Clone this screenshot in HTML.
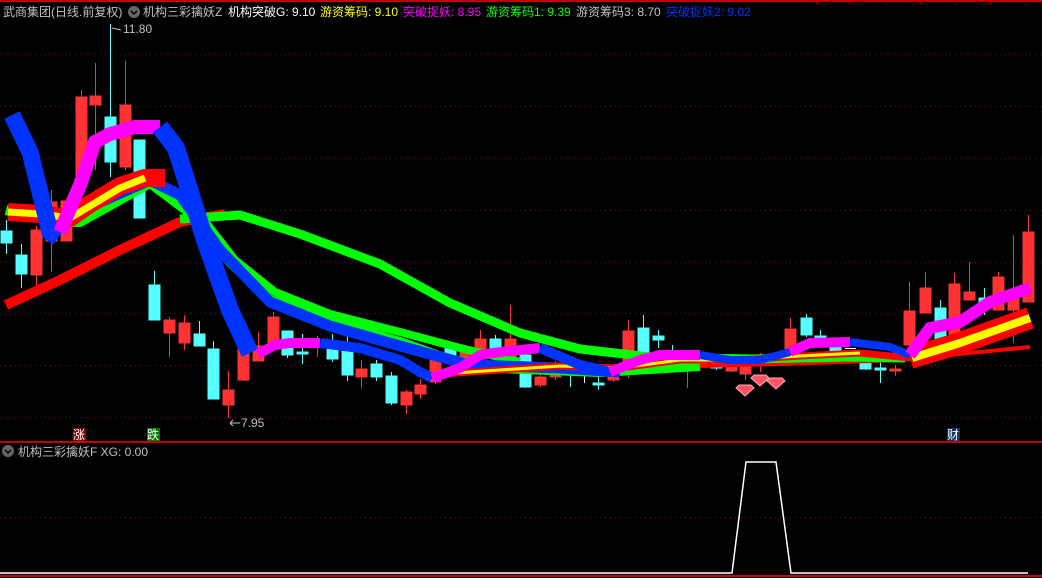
<!DOCTYPE html>
<html><head><meta charset="utf-8"><style>
html,body{margin:0;padding:0;background:#000;width:1042px;height:578px;overflow:hidden}
svg{display:block}
text{font-family:"Liberation Sans","Noto Sans CJK SC",sans-serif;font-size:12px}
</style></head><body>
<svg width="1042" height="578" viewBox="0 0 1042 578" xmlns="http://www.w3.org/2000/svg">
<rect width="1042" height="578" fill="#000"/>
<line x1="0" y1="1" x2="1042" y2="1" stroke="#c00000" stroke-width="2"/>
<g stroke="#c00000" stroke-width="1"><line x1="816.5" y1="0" x2="816.5" y2="4"/><line x1="850.5" y1="0" x2="850.5" y2="4"/><line x1="885.5" y1="0" x2="885.5" y2="4"/><line x1="920.5" y1="0" x2="920.5" y2="4"/><line x1="955.5" y1="0" x2="955.5" y2="4"/><line x1="990.5" y1="0" x2="990.5" y2="4"/><line x1="1025.5" y1="0" x2="1025.5" y2="4"/></g>
<g stroke="#7a1010" stroke-width="1" stroke-dasharray="1,4">
<line x1="0" y1="54.5" x2="1042" y2="54.5"/><line x1="0" y1="106.5" x2="1042" y2="106.5"/><line x1="0" y1="158.5" x2="1042" y2="158.5"/><line x1="0" y1="210.5" x2="1042" y2="210.5"/><line x1="0" y1="262.5" x2="1042" y2="262.5"/><line x1="0" y1="313.5" x2="1042" y2="313.5"/><line x1="0" y1="365.5" x2="1042" y2="365.5"/><line x1="0" y1="417.5" x2="1042" y2="417.5"/><line x1="0" y1="517.5" x2="1042" y2="517.5"/>
</g>
<line x1="0" y1="442" x2="1042" y2="442" stroke="#c00000" stroke-width="2"/>
<line x1="0" y1="576" x2="1042" y2="576" stroke="#c00000" stroke-width="2"/>

<g stroke-width="1">
<g stroke="#54ffff" fill="#54ffff">
<line x1="6.5" y1="220" x2="6.5" y2="254"/><rect x="1" y="231" width="11" height="12"/>
<line x1="21.5" y1="244" x2="21.5" y2="288"/><rect x="16" y="255" width="11" height="19"/>
<line x1="110.5" y1="24" x2="110.5" y2="177"/><rect x="105" y="117" width="11" height="45"/>
<line x1="139.5" y1="140" x2="139.5" y2="218"/><rect x="134" y="140" width="11" height="78"/>
<line x1="154.5" y1="271" x2="154.5" y2="320"/><rect x="149" y="285" width="11" height="35"/>
<line x1="199.5" y1="321" x2="199.5" y2="346"/><rect x="194" y="334" width="11" height="12"/>
<line x1="213.5" y1="341" x2="213.5" y2="399"/><rect x="208" y="349" width="11" height="50"/>
<line x1="287.5" y1="331" x2="287.5" y2="358"/><rect x="282" y="331" width="11" height="24"/>
<line x1="302.5" y1="334" x2="302.5" y2="364"/><rect x="297" y="352" width="11" height="2"/>
<line x1="332.5" y1="334" x2="332.5" y2="362"/><rect x="327" y="348" width="11" height="11"/>
<line x1="347.5" y1="336" x2="347.5" y2="381"/><rect x="342" y="348" width="11" height="27"/>
<line x1="376.5" y1="360" x2="376.5" y2="381"/><rect x="371" y="364" width="11" height="13"/>
<line x1="391.5" y1="372" x2="391.5" y2="405"/><rect x="386" y="376" width="11" height="27"/>
<line x1="450.5" y1="344" x2="450.5" y2="360"/><rect x="445" y="348" width="11" height="10"/>
<line x1="495.5" y1="335" x2="495.5" y2="358"/><rect x="490" y="339" width="11" height="16"/>
<line x1="525.5" y1="351" x2="525.5" y2="388"/><rect x="520" y="355" width="11" height="32"/>
<line x1="570.5" y1="362" x2="570.5" y2="387"/><rect x="565" y="372" width="11" height="2"/>
<line x1="598.5" y1="375" x2="598.5" y2="390"/><rect x="593" y="383" width="11" height="2"/>
<line x1="643.5" y1="315" x2="643.5" y2="356"/><rect x="638" y="328" width="11" height="25"/>
<line x1="658.5" y1="330" x2="658.5" y2="348"/><rect x="653" y="336" width="11" height="4"/>
<line x1="672.5" y1="345" x2="672.5" y2="372"/><rect x="667" y="357" width="11" height="6"/>
<line x1="716.5" y1="358" x2="716.5" y2="370"/><rect x="711" y="362" width="11" height="6"/>
<line x1="806.5" y1="314" x2="806.5" y2="337"/><rect x="801" y="318" width="11" height="17"/>
<line x1="820.5" y1="330" x2="820.5" y2="344"/><rect x="815" y="336" width="11" height="6"/>
<line x1="835.5" y1="343" x2="835.5" y2="355"/><rect x="830" y="346" width="11" height="7"/>
<line x1="865.5" y1="355" x2="865.5" y2="370"/><rect x="860" y="357" width="11" height="12"/>
<line x1="880.5" y1="362" x2="880.5" y2="383"/><rect x="875" y="368" width="11" height="2"/>
<line x1="940.5" y1="300" x2="940.5" y2="342"/><rect x="935" y="308" width="11" height="34"/>
<line x1="984.5" y1="288" x2="984.5" y2="315"/><rect x="979" y="298" width="11" height="4"/>
</g>
<g stroke="#ff3333" fill="#ff3333">
<line x1="36.5" y1="226" x2="36.5" y2="285"/><rect x="31" y="230" width="11" height="45"/>
<line x1="51.5" y1="190" x2="51.5" y2="272"/><rect x="46" y="202" width="11" height="39"/>
<line x1="66.5" y1="199" x2="66.5" y2="241"/><rect x="61" y="201" width="11" height="40"/>
<line x1="81.5" y1="90" x2="81.5" y2="177"/><rect x="76" y="97" width="11" height="80"/>
<line x1="95.5" y1="63" x2="95.5" y2="170"/><rect x="90" y="96" width="11" height="9"/>
<line x1="125.5" y1="61" x2="125.5" y2="170"/><rect x="120" y="105" width="11" height="62"/>
<line x1="169.5" y1="317" x2="169.5" y2="357"/><rect x="164" y="320" width="11" height="13"/>
<line x1="184.5" y1="315" x2="184.5" y2="350"/><rect x="179" y="323" width="11" height="20"/>
<line x1="228.5" y1="371" x2="228.5" y2="418"/><rect x="223" y="390" width="11" height="15"/>
<line x1="243.5" y1="332" x2="243.5" y2="381"/><rect x="238" y="347" width="11" height="33"/>
<line x1="258.5" y1="332" x2="258.5" y2="361"/><rect x="253" y="346" width="11" height="15"/>
<line x1="273.5" y1="312" x2="273.5" y2="343"/><rect x="268" y="317" width="11" height="26"/>
<line x1="317.5" y1="336" x2="317.5" y2="357"/><rect x="312" y="344" width="11" height="3"/>
<line x1="361.5" y1="360" x2="361.5" y2="388"/><rect x="356" y="369" width="11" height="8"/>
<line x1="406.5" y1="390" x2="406.5" y2="414"/><rect x="401" y="392" width="11" height="13"/>
<line x1="420.5" y1="379" x2="420.5" y2="399"/><rect x="415" y="385" width="11" height="9"/>
<line x1="435.5" y1="352" x2="435.5" y2="384"/><rect x="430" y="355" width="11" height="27"/>
<line x1="465.5" y1="346" x2="465.5" y2="360"/><rect x="460" y="349" width="11" height="9"/>
<line x1="480.5" y1="330" x2="480.5" y2="360"/><rect x="475" y="339" width="11" height="15"/>
<line x1="510.5" y1="305" x2="510.5" y2="368"/><rect x="505" y="339" width="11" height="18"/>
<line x1="540.5" y1="375" x2="540.5" y2="387"/><rect x="535" y="377" width="11" height="8"/>
<line x1="555.5" y1="361" x2="555.5" y2="380"/><rect x="550" y="368" width="11" height="9"/>
<line x1="613.5" y1="370" x2="613.5" y2="382"/><rect x="608" y="374" width="11" height="6"/>
<line x1="628.5" y1="320" x2="628.5" y2="378"/><rect x="623" y="331" width="11" height="43"/>
<line x1="687.5" y1="360" x2="687.5" y2="388"/><rect x="682" y="366" width="11" height="2"/>
<line x1="702.5" y1="358" x2="702.5" y2="366"/><rect x="697" y="362" width="11" height="2"/>
<line x1="731.5" y1="362" x2="731.5" y2="372"/><rect x="726" y="367" width="11" height="4"/>
<line x1="745.5" y1="360" x2="745.5" y2="380"/><rect x="740" y="366" width="11" height="8"/>
<line x1="760.5" y1="353" x2="760.5" y2="372"/><rect x="755" y="362" width="11" height="3"/>
<line x1="775.5" y1="358" x2="775.5" y2="366"/><rect x="770" y="361" width="11" height="3"/>
<line x1="790.5" y1="318" x2="790.5" y2="358"/><rect x="785" y="329" width="11" height="27"/>
<line x1="895.5" y1="365" x2="895.5" y2="376"/><rect x="890" y="369" width="11" height="2"/>
<line x1="909.5" y1="282" x2="909.5" y2="350"/><rect x="904" y="311" width="11" height="34"/>
<line x1="925.5" y1="272" x2="925.5" y2="313"/><rect x="920" y="288" width="11" height="25"/>
<line x1="954.5" y1="273" x2="954.5" y2="335"/><rect x="949" y="284" width="11" height="51"/>
<line x1="969.5" y1="262" x2="969.5" y2="300"/><rect x="964" y="292" width="11" height="8"/>
<line x1="998.5" y1="272" x2="998.5" y2="310"/><rect x="993" y="277" width="11" height="33"/>
<line x1="1013.5" y1="235" x2="1013.5" y2="343"/><rect x="1008" y="296" width="11" height="14"/>
<line x1="1028.5" y1="215" x2="1028.5" y2="302"/><rect x="1023" y="232" width="11" height="70"/>
</g>
<g stroke="#fff"><line x1="579" y1="374.5" x2="590" y2="374.5"/><line x1="584.5" y1="368" x2="584.5" y2="383"/><line x1="845" y1="348.5" x2="856" y2="348.5"/></g>
</g>

<polyline fill="none" stroke="#ff0000" stroke-width="10" points="6,305 60,280 120,250 180,222 225,214"/>
<polyline fill="none" stroke="#ff0000" stroke-width="4" points="700,366 780,364 900,360 1030,347"/>
<polyline fill="none" stroke="#00ff00" stroke-width="9" stroke-linejoin="round" points="180,219 240,215 300,234 380,264 450,303 520,333 580,349 650,357 750,359 850,357 905,358"/>
<polyline fill="none" stroke="#00ff00" stroke-width="10" stroke-linejoin="round" points="6,210 30,216 60,222 80,222 150,183 190,213 230,262 270,300 330,322 400,342 450,360 500,368 600,372 700,366"/>
<polyline fill="none" stroke="#00ff00" stroke-width="8" stroke-linejoin="round" points="150,178 200,215 235,260 275,292 330,314 400,332 460,348 520,362"/>
<polyline fill="none" stroke="#0033ff" stroke-width="11" stroke-linejoin="round" points="10,212 40,214 60,220 150,180 180,195 220,250 270,302 330,326 400,346 470,365 560,368 620,372"/>
<polyline fill="none" stroke="#ff0000" stroke-width="18" stroke-linejoin="round" points="8,212 40,214 70,218 90,204 120,186 145,178 165,178"/>
<polyline fill="none" stroke="#ffff00" stroke-width="7" stroke-linejoin="round" points="8,212 40,214 70,218 90,206 120,188 145,178"/>
<polyline fill="none" stroke="#ff0000" stroke-width="7" stroke-linejoin="round" points="440,374 500,370 560,366 620,368 680,360 740,360 800,356 860,353 910,358 960,344 1030,318"/>
<polyline fill="none" stroke="#ffff00" stroke-width="3" stroke-linejoin="round" points="440,374 500,370 560,366 620,368 680,360 740,360 800,356 860,353"/>
<polyline fill="none" stroke="#ff0000" stroke-width="22" stroke-linejoin="round" points="910,358 960,343 1030,318"/>
<polyline fill="none" stroke="#ffff00" stroke-width="8" stroke-linejoin="round" points="912,358 960,343 1030,318"/>
<g fill="none" stroke-width="14" stroke-linejoin="miter">
<polyline stroke="#0033ff" stroke-width="17" points="12,115 30,152 50,232 58,238"/>
<polyline stroke="#ff00ff" points="60,232 80,185 95,142 110,134 135,127 160,127"/>
<polyline stroke="#0033ff" stroke-width="18" points="160,127 176,148 190,192 205,240 230,310 250,353"/>
<polyline stroke="#ff00ff" stroke-width="10" points="258,354 275,345 290,343 320,343"/>
<polyline stroke="#0033ff" stroke-width="10" points="320,343 360,348 400,360 420,372 432,378"/>
<polyline stroke="#ff00ff" stroke-width="10" points="432,378 460,368 480,355 500,352 540,348"/>
<polyline stroke="#0033ff" stroke-width="10" points="540,348 580,365 610,372"/>
<polyline stroke="#ff00ff" stroke-width="10" points="610,372 640,360 660,355 700,355"/>
<polyline stroke="#0033ff" stroke-width="8" points="700,355 730,360 760,360 790,352"/>
<polyline stroke="#ff00ff" stroke-width="10" points="790,352 810,343 850,342"/>
<polyline stroke="#0033ff" stroke-width="8" points="850,342 890,347 910,355"/>
<polyline stroke="#ff00ff" stroke-width="12" points="910,355 930,328 960,322 990,302 1030,288"/>
</g>
<g fill="#ff5566" stroke="#ffaaaa" stroke-width="1">
<path d="M739,385 L751,385 L754,388 L745,396 L736,388 Z"/>
<path d="M754,375 L766,375 L769,378 L760,386 L751,378 Z"/>
<path d="M770,378 L782,378 L785,381 L776,389 L767,381 Z"/>
</g>
<g fill="#c0c0c0" stroke="none">
<text x="123" y="33">11.80</text>
<text x="241" y="427">7.95</text>
</g>
<g stroke="#c0c0c0" fill="none"><path d="M112,28 L121,30"/><path d="M230,423 L240,423 M230,423 L233,420 M230,423 L233,426"/></g>
<rect x="73" y="428" width="13" height="13" fill="#8b0000"/><text x="73" y="439" fill="#fff">涨</text>
<rect x="147" y="428" width="13" height="13" fill="#007700"/><text x="147" y="439" fill="#fff">跌</text>
<rect x="947" y="428" width="13" height="13" fill="#103060"/><text x="947" y="439" fill="#fff">财</text>
<text x="3" y="16" fill="#c0c0c0">武商集团(日线.前复权)</text>
<circle cx="134" cy="12" r="6" fill="#666"/><path d="M131,11 L134,14 L137,11" stroke="#000" stroke-width="1.5" fill="none"/>
<text x="143" y="16" fill="#c0c0c0">机构三彩擒妖Z</text>
<text x="228" y="16" fill="#fff">机构突破G: 9.10</text>
<text x="320" y="16" fill="#ffff00">游资筹码: 9.10</text>
<text x="403" y="16" fill="#ff00ff">突破捉妖: 8.95</text>
<text x="486" y="16" fill="#00ff00">游资筹码1: 9.39</text>
<text x="576" y="16" fill="#c0c0c0">游资筹码3: 8.70</text>
<text x="666" y="16" fill="#0033ff">突破捉妖2: 9.02</text>
<circle cx="8" cy="451" r="6" fill="#666"/><path d="M5,450 L8,453 L11,450" stroke="#000" stroke-width="1.5" fill="none"/>
<text x="18" y="456" fill="#c0c0c0">机构三彩擒妖F  XG: 0.00</text>
<polyline fill="none" stroke="#fff" stroke-width="1.5" points="0,573 732,573 746,462 776,462 791,573 1028,573"/>
</svg>
</body></html>
